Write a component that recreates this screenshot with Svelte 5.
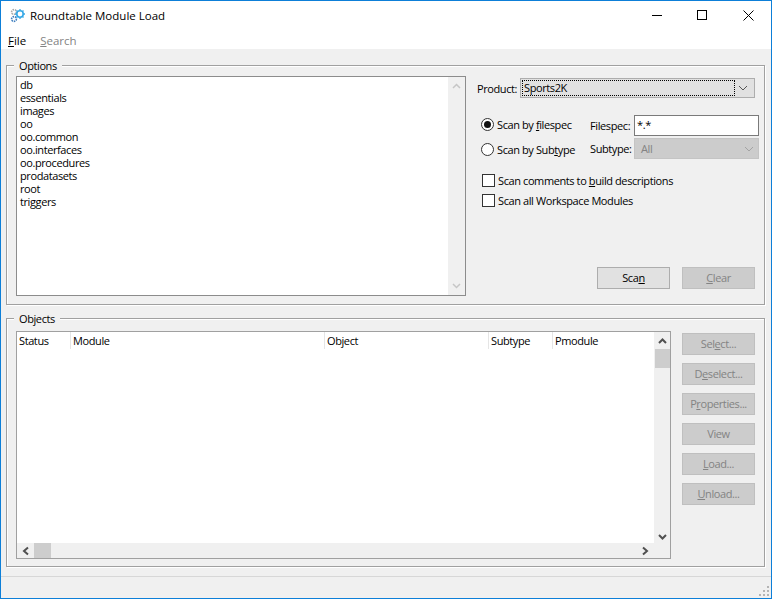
<script>
  const modules = ['db','essentials','images','oo','oo.common','oo.interfaces','oo.procedures','prodatasets','root','triggers'];
  const columns = [['Status',54],['Module',254],['Object',164],['Subtype',64],['Pmodule',99]];
  const actions = [['Select',3,'...'],['Deselect',1,'...'],['Properties',1,'...'],['View',-1,''],['Load',0,'...'],['Unload',0,'...']];
  const split = (t, i) => i < 0 ? [t,'',''] : [t.slice(0,i), t[i], t.slice(i+1)];
</script>

<div class="window">
  <header class="titlebar">
    <svg class="appicon" width="18" height="16" viewBox="0 0 18 16" fill="none">
      <circle cx="5" cy="4" r="2.400" stroke="#a9a9a9" stroke-width="1.600" stroke-dasharray="1.400 .8"/>
      <g transform="translate(-1 0)">
        <circle cx="12" cy="6" r="3.200" stroke="#35a8e6" stroke-width="1.600"/>
        <path d="M12 1v1.600M12 9.400V11M7 6h1.600M15.400 6H17M8.500 2.500l1.100 1.100M14.400 8.400l1.100 1.100M8.500 9.500l1.100-1.100M14.400 3.600l1.100-1.100" stroke="#35a8e6" stroke-width="1.300"/>
      </g>
      <circle cx="5" cy="11" r="2.400" stroke="#3f7fbf" stroke-width="1.600" stroke-dasharray="1.400 .8"/>
    </svg>
    <span class="title">Roundtable Module Load</span>
    <div class="controls">
      <svg width="11" height="11" viewBox="0 0 11 11"><path d="M0 5.500h10" stroke="#000"/></svg>
      <svg width="11" height="11" viewBox="0 0 11 11" fill="none"><rect x=".5" y=".5" width="9" height="9" stroke="#000"/></svg>
      <svg class="close" width="11" height="11" viewBox="0 0 11 11" fill="none"><path d="M.5 .5l10 10M10.500 .5l-10 10" stroke="#000"/></svg>
    </div>
  </header>

  <nav class="menubar">
    <span><u>F</u>ile</span>
    <span class="off"><u>S</u>earch</span>
  </nav>

  <main class="main">
    <section class="group options">
      <span class="legend">Options</span>
      <div class="listbox">
        <ul>
          {#each modules as m}<li>{m}</li>{/each}
        </ul>
        <div class="vbar">
          <svg width="9" height="6" viewBox="0 0 9 6" fill="none"><path d="M1 5l3.500-3.500L8 5" stroke="#c6c6c6" stroke-width="1.500"/></svg>
          <svg width="9" height="6" viewBox="0 0 9 6" fill="none"><path d="M1 1l3.500 3.500L8 1" stroke="#c6c6c6" stroke-width="1.500"/></svg>
        </div>
      </div>

      <div class="panel">
        <div class="product">
          <span>Product:</span>
          <div class="combo">
            <span class="focus">Sports2K</span>
            <svg width="10" height="6" viewBox="0 0 10 6" fill="none"><path d="M1 1l4 4 4-4" stroke="#555"/></svg>
          </div>
        </div>

        <div class="scan">
          <div class="radios">
            <div class="check"><span class="radio on"></span><span>Scan by <u>f</u>ilespec</span></div>
            <div class="check"><span class="radio"></span><span>Scan by Sub<u>t</u>ype</span></div>
          </div>
          <div class="fields">
            <div class="field"><span>Filespec:</span><div class="input">*.*</div></div>
            <div class="field"><span>Subtype:</span>
              <div class="select"><span>All</span>
                <svg width="10" height="6" viewBox="0 0 10 6" fill="none"><path d="M1 1l4 4 4-4" stroke="#a3a3a3"/></svg>
              </div>
            </div>
          </div>
        </div>

        <div class="boxes">
          <div class="check"><span class="box"></span><span>Scan comments to <u>b</u>uild descriptions</span></div>
          <div class="check"><span class="box"></span><span>Scan all Workspace Modules</span></div>
        </div>

        <div class="scanbtns">
          <button class="btn">Sca<u>n</u></button>
          <button class="btn off"><u>C</u>lear</button>
        </div>
      </div>
    </section>

    <section class="group objects">
      <span class="legend">Objects</span>
      <div class="table">
        <div class="tablebody">
          <div class="thead">
            {#each columns as [name, w]}
              <span class="th" style="width:{w}px">{name}</span>
            {/each}
          </div>
          <div class="hbar">
            <svg width="9" height="10" viewBox="0 0 9 10" fill="none"><path d="M7 1.500L3 5l4 3.500" stroke="#505050" stroke-width="2"/></svg>
            <span class="hthumb"></span>
            <svg class="hright" width="9" height="10" viewBox="0 0 9 10" fill="none"><path d="M2 1.500L6 5 2 8.500" stroke="#505050" stroke-width="2"/></svg>
          </div>
        </div>
        <div class="tvbar">
          <svg width="9" height="6" viewBox="0 0 9 6" fill="none"><path d="M1 5l3.500-3.500L8 5" stroke="#505050" stroke-width="2"/></svg>
          <span class="vthumb"></span>
          <svg class="vdown" width="9" height="6" viewBox="0 0 9 6" fill="none"><path d="M1 1l3.500 3.500L8 1" stroke="#505050" stroke-width="2"/></svg>
        </div>
      </div>
      <div class="actions">
        {#each actions as [t, i, tail]}
          {@const p = split(t, i)}
          <button class="btn off">{p[0]}<u>{p[1]}</u>{p[2]}{tail}</button>
        {/each}
      </div>
    </section>
  </main>

  <footer class="status">
    <svg width="12" height="12" viewBox="0 0 12 12" fill="#b4b4b4">
      <rect x="8" y="0" width="2" height="2"/><rect x="4" y="4" width="2" height="2"/><rect x="8" y="4" width="2" height="2"/>
      <rect x="0" y="8" width="2" height="2"/><rect x="4" y="8" width="2" height="2"/><rect x="8" y="8" width="2" height="2"/>
    </svg>
  </footer>
</div>

<style>
  :global(body) { margin: 0; }
  .window {
    width: 772px; height: 599px; box-sizing: border-box;
    border: 1px solid #0d7fd8; background: #f0f0f0;
    display: flex; flex-direction: column;
    font: 11px/13px "Open Sans", sans-serif; letter-spacing: -.4px; color: #000;
  }
  u { text-underline-offset: 1px; }
  .titlebar {
    height: 29px; background: #fff; display: flex; align-items: center;
    padding: 0 0 0 8px; flex: none;
  }
  .appicon { margin-right: 3px; }
  .title { font-size: 11.500px; letter-spacing: 0; }
  .controls { margin-left: auto; display: flex; gap: 34px; padding-right: 17px; }
  .controls svg { display: block; }
  .controls .close { margin-left: 1px; }
  .menubar {
    height: 19px; background: #fff; display: flex; gap: 14px; padding: 1px 0 0 7px;
    flex: none; align-items: center; box-sizing: border-box; letter-spacing: 0; font-size: 11.500px;
  }
  .off { color: #838383; }
  .main { flex: none; padding: 16px 0 0 5px; }
  .group {
    position: relative; box-sizing: border-box; width: 759px;
    border: 1px solid #a0a0a0;
    box-shadow: 1px 1px 0 #fff, inset 1px 1px 0 #fff;
    display: flex;
  }
  .legend {
    position: absolute; left: 7px; top: -7px; background: #f0f0f0; padding: 0 5px;
  }
  .options { height: 240px; padding: 10px 9px 8px 9px; gap: 11px; }
  .objects { height: 249px; margin-top: 13px; padding: 12px 9px 7px 9px; gap: 11px; }

  .listbox {
    width: 450px; box-sizing: border-box; flex: none; display: flex;
    border: 1px solid #8c8c8c; background: #fff;
  }
  .listbox ul { flex: 1; list-style: none; margin: 0; padding: 1px 0 0 3px; }
  .listbox li { height: 13px; }
  .vbar {
    width: 17px; background: #f0f0f0; display: flex; flex-direction: column;
    justify-content: space-between; align-items: center; padding: 6px 0;
  }
  .vbar svg { display: block; }

  .panel { flex: 1; display: flex; flex-direction: column; position: relative; }
  .product { display: flex; align-items: center; height: 20px; margin-top: 2px; }
  .product > span { width: 43px; }
  .combo {
    width: 235px; height: 20px; box-sizing: border-box; border: 1px solid #adadad;
    background: #e1e1e1; display: flex; align-items: center; justify-content: space-between;
    padding: 1px 6px 1px 1px;
  }
  .focus {
    width: 213px; height: 16px; box-sizing: border-box; border: 1px dotted #000;
    padding-left: 1px; line-height: 14px;
  }
  .scan { display: flex; margin: 17px 0 0 4px; }
  .radios { width: 109px; display: flex; flex-direction: column; gap: 8px; padding-top: 1px; }
  .check { display: flex; align-items: center; height: 17px; gap: 3px; white-space: nowrap; }
  .radio {
    width: 13px; height: 13px; box-sizing: border-box; border: 1px solid #333;
    border-radius: 50%; background: #fff; display: flex; align-items: center; justify-content: center; flex: none;
  }
  .radio.on::after { content: ""; width: 7px; height: 7px; border-radius: 50%; background: #111; }
  .fields { display: flex; flex-direction: column; gap: 2px; }
  .field { display: flex; align-items: center; }
  .field > span { width: 44px; }
  .input {
    width: 125px; height: 21px; box-sizing: border-box; border: 1px solid #7a7a7a; background: #fff;
    padding: 2px 0 0 2px;
  }
  .select {
    width: 125px; height: 21px; box-sizing: border-box; border: 1px solid #c4c4c4; background: #ccc;
    color: #838383; display: flex; align-items: center; justify-content: space-between; padding: 0 4px 0 6px;
  }
  .boxes { display: flex; flex-direction: column; gap: 3px; margin: 13px 0 0 5px; }
  .box { width: 13px; height: 13px; box-sizing: border-box; border: 1px solid #333; background: #fff; flex: none; }
  .scanbtns { display: flex; gap: 12px; margin: auto 0 7px 120px; }

  .btn {
    width: 73px; height: 22px; box-sizing: border-box; border: 1px solid #adadad;
    background: #e1e1e1; font: inherit; letter-spacing: inherit; color: #000; padding: 0 0 2px;
  }
  .btn.off { background: #ccc; border-color: #bfbfbf; color: #838383; }

  .table {
    width: 655px; box-sizing: border-box; flex: none; display: flex; background: #fff;
    border: 1px solid #a0a0a0;
  }
  .tablebody { flex: 1; display: flex; flex-direction: column; justify-content: space-between; min-width: 0; }
  .thead { display: flex; height: 17px; }
  .th { box-sizing: border-box; padding: 2px 0 0 2px; border-right: 1px solid #e5e5e5; flex: none; }
  .th:last-child { border-right: 0; }
  .hbar { height: 15px; background: #f0f0f0; display: flex; align-items: center; padding-left: 4px; }
  .hthumb { width: 17px; height: 15px; background: #cdcdcd; margin-left: 4px; }
  .hright { margin-left: auto; margin-right: 4px; }
  .tvbar {
    width: 16px; background: #f0f0f0; display: flex; flex-direction: column; align-items: center;
    padding: 6px 0 18px; box-sizing: border-box;
  }
  .vthumb { width: 15px; height: 19px; background: #cdcdcd; margin-top: 5px; }
  .vdown { margin-top: auto; }
  .actions { display: flex; flex-direction: column; gap: 8px; padding-top: 2px; }

  .status {
    margin-top: 9px; flex: 1; border-top: 1px solid #d7d7d7; display: flex;
    justify-content: flex-end; align-items: flex-end;
  }
  .status svg { display: block; }
</style>
